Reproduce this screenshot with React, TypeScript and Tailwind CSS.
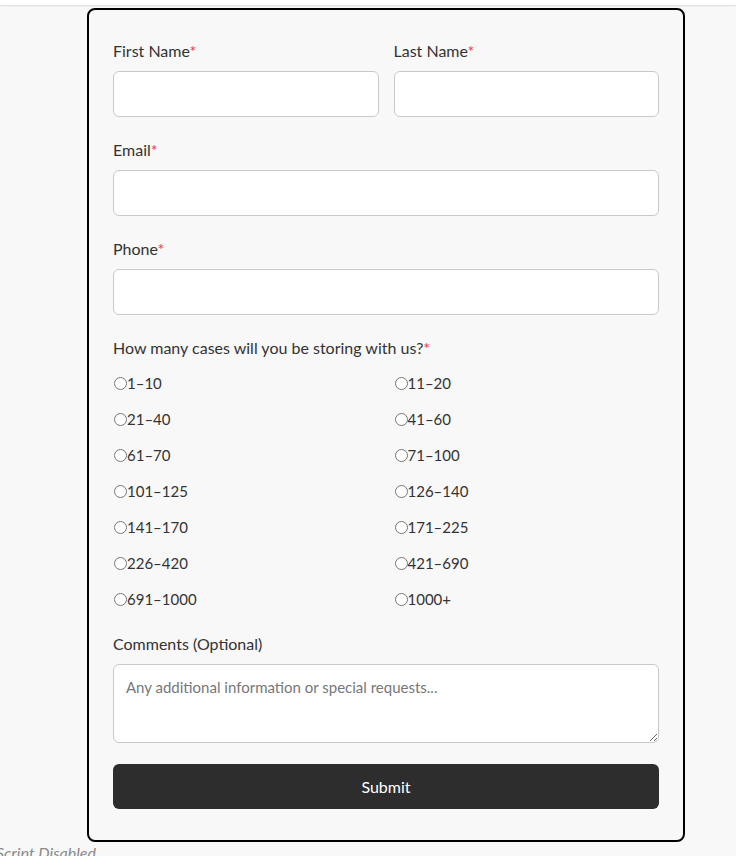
import React from "react";

const ranges = [
  ["1-10", "11-20"],
  ["21-40", "41-60"],
  ["61-70", "71-100"],
  ["101-125", "126-140"],
  ["141-170", "171-225"],
  ["226-420", "421-690"],
  ["691-1000", "1000+"],
];

function Label({ text, req = true }: { text: string; req?: boolean }) {
  return (
    <div className="text-[16px] leading-[21px] text-[#333] mb-[10px]">
      {text}
      {req && <span className="text-[#e8354a]">*</span>}
    </div>
  );
}

const inputCls =
  "block w-full h-[46px] bg-white border border-[#c9c9c9] rounded-[6px] outline-none";

export default function App() {
  return (
    <div
      className="min-h-[856px] bg-[#f8f8f8] overflow-hidden"
      style={{ fontFamily: "Lato, 'Open Sans', sans-serif" }}
    >
      <div className="h-[5px] bg-white shadow-[0_1px_2px_rgba(0,0,0,0.12)]" />
      <div className="mt-[3px] ml-[87px] w-[598px] border-2 border-black rounded-[8px] bg-[#f8f8f8] px-[24px] pt-[30px] pb-[31px]">
        <div className="grid grid-cols-2 gap-x-[15px]">
          <div>
            <Label text="First Name" />
            <input className={inputCls} />
          </div>
          <div>
            <Label text="Last Name" />
            <input className={inputCls} />
          </div>
        </div>
        <div className="mt-[22px]">
          <Label text="Email" />
          <input className={inputCls} />
        </div>
        <div className="mt-[22px]">
          <Label text="Phone" />
          <input className={inputCls} />
        </div>
        <div className="mt-[22px]">
          <div className="text-[16px] leading-[21px] text-[#333] mb-[15px]">
            How many cases will you be storing with us?
            <span className="text-[#e8354a]">*</span>
          </div>
          <div className="grid grid-cols-2 gap-x-[15px] gap-y-[15px]">
            {ranges.flat().map((r, i) => (
              <label
                key={i}
                className="flex items-center h-[21px] text-[15px] text-[#333] pl-[1px]"
              >
                <input
                  type="radio"
                  name="cases"
                  className="w-[13px] h-[13px] m-0 mr-0"
                />
                <span>{r.replace("-", "–")}</span>
              </label>
            ))}
          </div>
        </div>
        <div className="mt-[23px]">
          <Label text="Comments (Optional)" req={false} />
          <textarea
            className="block w-full h-[79px] bg-white border border-[#c9c9c9] rounded-[6px] px-[12px] py-[12px] text-[15px] leading-[20px] text-[#333] placeholder:text-[#777] outline-none"
            placeholder="Any additional information or special requests..."
          />
        </div>
        <button className="mt-[21px] w-full h-[45px] bg-[#2d2d2d] rounded-[6px] text-white text-[16px]">
          Submit
        </button>
      </div>
      <div className="ml-[-4px] mt-[1px] text-[16px] italic text-[#8a8a8a] leading-[20px]">
        Script Disabled
      </div>
    </div>
  );
}
